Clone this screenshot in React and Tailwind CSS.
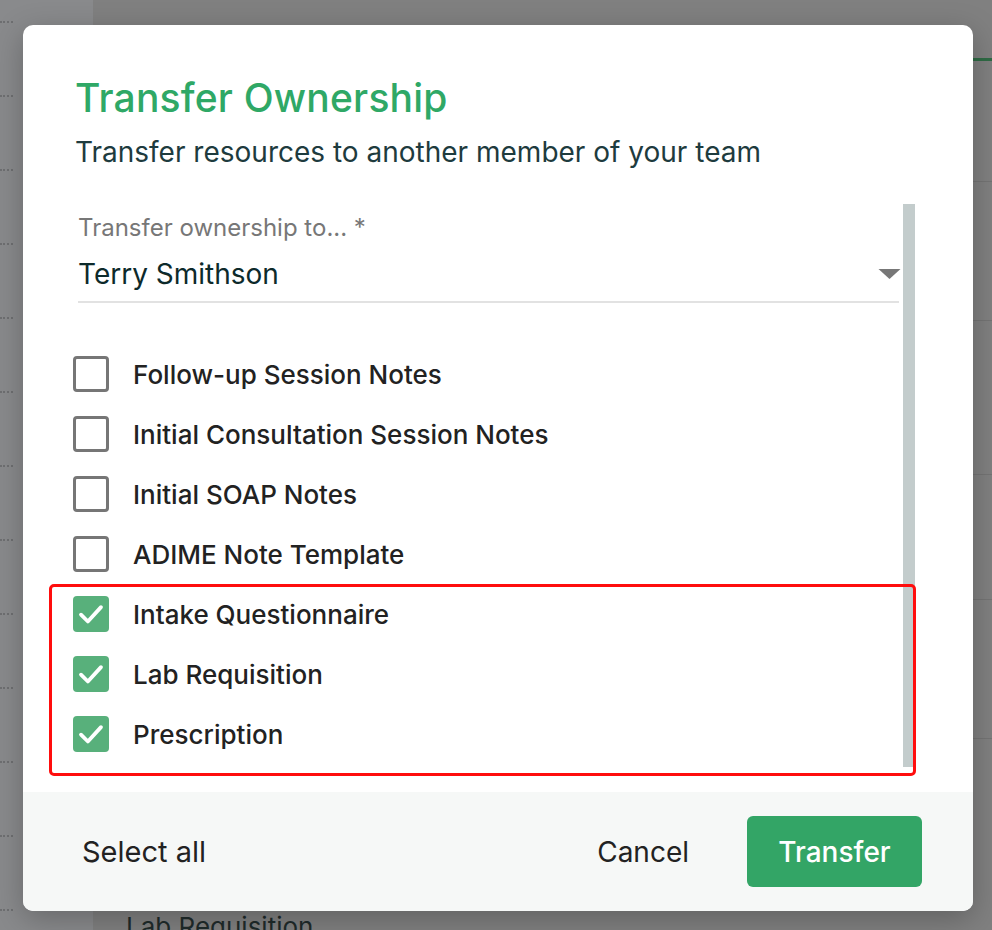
import React, { useState } from "react";

const ITEMS = [
  { id: 1, name: "Follow-up Session Notes", checked: false },
  { id: 2, name: "Initial Consultation Session Notes", checked: false },
  { id: 3, name: "Initial SOAP Notes", checked: false },
  { id: 4, name: "ADIME Note Template", checked: false },
  { id: 5, name: "Intake Questionnaire", checked: true },
  { id: 6, name: "Lab Requisition", checked: true },
  { id: 7, name: "Prescription", checked: true },
];

function Box({ checked }) {
  if (checked) {
    return (
      <span className="w-[36px] h-[36px] rounded-[4px] bg-[#58b07b] flex items-center justify-center shrink-0">
        <svg width="30" height="30" viewBox="0 0 24 24" fill="none" stroke="#fff" strokeWidth="3" strokeLinecap="round" strokeLinejoin="round">
          <polyline points="4 12.5 9.5 18 20 6.5" />
        </svg>
      </span>
    );
  }
  return <span className="w-[36px] h-[36px] rounded-[4px] border-[3px] border-[#767676] bg-white shrink-0" />;
}

export default function App() {
  const [items, setItems] = useState(ITEMS);
  const toggle = (id) => setItems(list => list.map(i => i.id === id ? { ...i, checked: !i.checked } : i));

  return (
    <div className="relative h-[930px] w-full overflow-hidden bg-[#858687] font-['Inter',sans-serif]">
      {/* page behind the overlay */}
      <div className="flex h-full">
        <div className="w-[93px] bg-[#898a8c] pt-[21px] flex flex-col gap-[72px]">
          {Array.from({ length: 13 }).map((_, i) => (
            <div key={i} className="w-[13px] border-t-2 border-dotted border-[#6e6f71]" />
          ))}
        </div>
        <div className="flex-1 bg-[#808080] overflow-hidden">
          <div className="h-[58px]" />
          <div className="h-[3px] bg-[#2f6b45] ml-auto w-[40px]" />
          <div className="h-[120px]" />
          <div className="border-t border-[#747474] h-[139px]" />
          <div className="border-t border-[#747474] h-[154px]" />
          <div className="border-t border-[#747474] h-[125px]" />
          <div className="border-t border-[#747474] h-[139px]" />
          <div className="border-t border-[#747474] pl-[33px] pt-[172px] text-[26px] leading-[32px] text-[#1f2b2b]">Lab Requisition</div>
        </div>
      </div>

      {/* modal */}
      <div className="absolute inset-0 pl-[23px] pt-[25px]">
        <div className="relative w-[950px] h-[886px] bg-white rounded-[10px] shadow-[0_8px_30px_rgba(0,0,0,0.25)] flex flex-col overflow-hidden">
          <div className="pl-[52px] pt-[49px]">
            <h1 className="text-[39px] leading-[48px] text-[#2fa866] font-medium tracking-[0.2px]">Transfer Ownership</h1>
            <p className="mt-[11px] text-[28px] leading-[38px] text-[#1e3b3e]">Transfer resources to another member of your team</p>
          </div>

          <div className="flex mt-[33px] pl-[50px] pr-[58px] h-[563px]">
            <div className="flex-1">
              <div className="ml-[5px] mr-[4px] border-b-2 border-[#e2e2e2] pb-[8px]">
                <div className="pt-[8px] text-[24px] leading-[32px] text-[#777]">Transfer ownership to... *</div>
                <div className="mt-[11px] flex items-center justify-between">
                  <span className="text-[28px] leading-[38px] text-[#0d2a2b]">Terry Smithson</span>
                  <svg width="23" height="11" viewBox="0 0 24 12" className="mr-[-2px]">
                    <polygon points="0,0 24,0 12,11" fill="#777" />
                  </svg>
                </div>
              </div>
              <ul className="mt-[41px] flex flex-col">
                {items.map(item => (
                  <li key={item.id} onClick={() => toggle(item.id)} className="h-[60px] flex items-center gap-[24px] cursor-pointer">
                    <Box checked={item.checked} />
                    <span className="text-[26px] text-[#222] font-medium">{item.name}</span>
                  </li>
                ))}
              </ul>
            </div>
            <div className="w-[12px] bg-[#c3cccc]" />
          </div>

          {/* annotation highlight */}
          <div className="absolute left-[26px] top-[559px] w-[867px] h-[192px] border-[3px] border-[#ff0d0d] rounded-[5px] pointer-events-none" />

          <div className="mt-auto h-[119px] bg-[#f6f8f7] flex items-center pl-[59px] pr-[51px]">
            <button className="text-[29px] text-[#222]">Select all</button>
            <button className="ml-auto text-[28px] text-[#222]">Cancel</button>
            <button className="ml-[58px] w-[175px] h-[71px] rounded-[6px] bg-[#33a566] text-white text-[28px] font-medium">Transfer</button>
          </div>
        </div>
      </div>
    </div>
  );
}
